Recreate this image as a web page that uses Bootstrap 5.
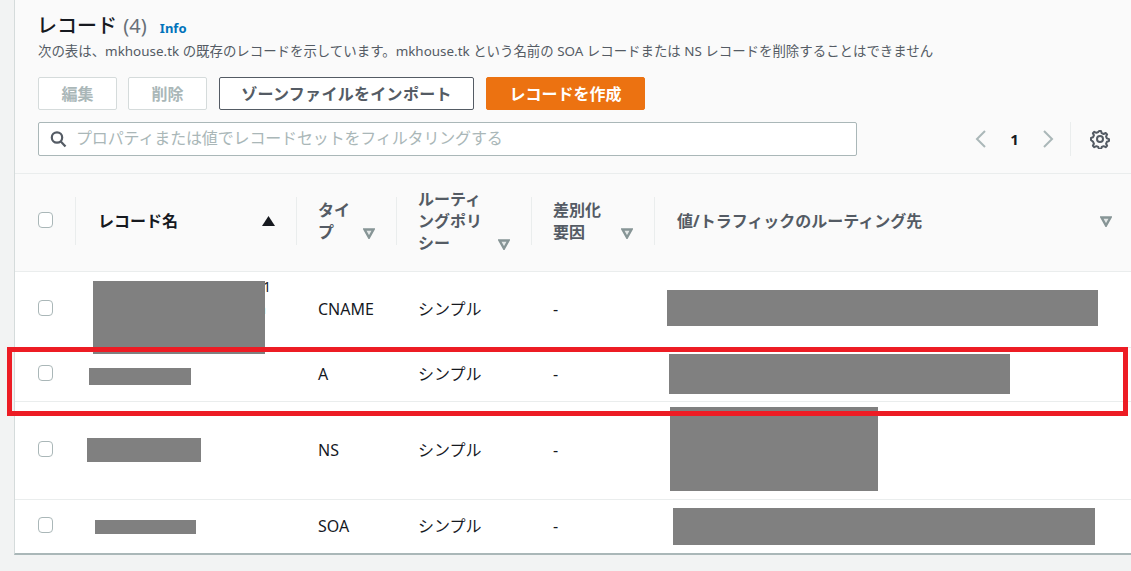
<!DOCTYPE html>
<html lang="ja">
<head>
  <meta charset="UTF-8">
  <title>レコード</title>
  <link href="https://cdn.jsdelivr.net/npm/bootstrap@5.3.0/dist/css/bootstrap.min.css" rel="stylesheet">
  <style>
    html, body { height: 571px; overflow: hidden; }
    body { background: #f2f3f3; color: #16191f; font-family: "Noto Sans", "Noto Sans CJK JP", sans-serif; font-size: 16px; position: relative; }
    .rec-panel { margin-left: 14px; height: 555px; background: #fff; border-left: 1px solid #d5dbdb; border-bottom: 2px solid #aab7b8; }
    .rec-head { background: #fafafa; height: 174px; padding: 13px 0 0 23px; border-bottom: 1px solid #eaeded; }
    .rec-title { font-size: 20px; line-height: 26px; font-weight: 500; margin: 0 0 0 -1px; }
    .rec-count { color: #687078; font-weight: 400; margin-left: 1px; }
    .rec-info { color: #0073bb; font-size: 13px; font-weight: 700; text-decoration: none; margin-left: 8px; }
    .rec-desc { font-size: 13.43px; line-height: 20px; color: #545b64; margin: 0; }
    .rec-tools { margin-top: 16px; gap: 11px; }
    .rec-btn { height: 33px; padding: 0; font-size: 16px; font-weight: 700; line-height: 30px; border-radius: 2px; background: #fff; }
    .rec-btn-off { width: 79px; border: 1px solid #d5dbdb; color: #aab7b8; }
    .rec-btn-off:disabled { border-color: #d5dbdb; color: #aab7b8; background: #fff; opacity: 1; }
    .rec-btn-line { width: 255px; border: 1px solid #545b64; color: #545b64; margin-left: 1px; letter-spacing: .3px; }
    .rec-btn-main { width: 159px; border: 1px solid #ec7211; background: #ec7211; color: #fff; margin-left: 1px; }
    .rec-filter-row { margin-top: 12px; }
    .rec-filter { width: 819px; height: 34px; }
    .rec-filter .form-control { height: 34px; border: 1px solid #aab7b8; border-radius: 2px; padding: 0 8px 2px 37px; font-size: 16px; letter-spacing: -.15px; color: #16191f; }
    .rec-filter .form-control::placeholder { color: #aab7b8; opacity: 1; }
    .rec-search { left: 12px; top: 8px; }
    .rec-pager { margin-left: 117px; height: 34px; }
    .rec-page { width: 55px; text-align: center; font-size: 15px; font-weight: 700; }
    .rec-sep { width: 1px; height: 34px; background: #eaeded; margin-left: 15px; margin-right: 19px; }
    .rec-table { table-layout: fixed; width: 1116px; margin: 0; }
    .rec-table > :not(caption) > * > * { padding: 0; border-bottom: 1px solid #eaeded; box-shadow: none; background: transparent; color: #16191f; vertical-align: middle; }
    .rec-table .rec-h > th { height: 97px; background: #fafafa; font-weight: 700; color: #545b64; line-height: 22px; padding-bottom: 2px; }
    .rec-table .rec-h > th.rec-sorted { color: #16191f; }
    .rec-th { position: relative; min-height: 48px; padding-left: 22px; padding-right: 21px; display: flex; align-items: center; justify-content: space-between; }
    .rec-th::before { content: ""; position: absolute; left: 0; top: 50%; height: 48px; margin-top: -24px; border-left: 1px solid #eaeded; }
    .rec-th svg { flex: none; }
    .rec-th-name { padding-left: 23px; }
    .rec-th-last { padding-left: 23px; padding-right: 19px; }
    .rec-arrow { align-self: flex-end; margin-left: 8px; margin-bottom: 6px; }
    .rec-arrow-low { margin-bottom: 4px; }
    .rec-tick { width: 15px; height: 16px; margin: 0 0 2px 23px; border: 1px solid #aab7b8; border-radius: 3px; display: block; }
    .rec-tick.form-check-input { margin-top: 0; }
    .rec-cell { padding-left: 22px !important; line-height: 22px; }
    .rec-r1 { height: 76px; }
    .rec-r2 { height: 54px; }
    .rec-r3 { height: 98px; }
    .rec-r4 { height: 54px; }
    .rec-table > tbody > tr:last-child > * { border-bottom: 0; }
    .rec-frag { text-align: right; padding-right: 25px; line-height: 22px; height: 22px; font-size: 14px; }
    .rec-frag-link { color: #0073bb; padding-right: 30px; }
    .redact { position: absolute; background: #808080; }
    .rd-n1 { left: 93px; top: 281px; width: 172px; height: 73px; }
    .rd-n2 { left: 89px; top: 368px; width: 102px; height: 17px; }
    .rd-n3 { left: 87px; top: 438px; width: 114px; height: 24px; }
    .rd-n4 { left: 95px; top: 520px; width: 101px; height: 14px; }
    .rd-v1 { left: 667px; top: 290px; width: 431px; height: 36px; }
    .rd-v2 { left: 669px; top: 354px; width: 341px; height: 40px; }
    .rd-v3 { left: 670px; top: 407px; width: 208px; height: 84px; }
    .rd-v4 { left: 673px; top: 508px; width: 422px; height: 37px; }
    .rec-callout { position: absolute; left: 7px; top: 347px; width: 1121px; height: 69px; border: 5px solid #ed1c24; }
  </style>
</head>
<body>
<div class="rec-panel">
  <div class="rec-head">
    <h2 class="rec-title">レコード <span class="rec-count">(4)</span> <a href="#" class="rec-info">Info</a></h2>
    <p class="rec-desc">次の表は、mkhouse.tk の既存のレコードを示しています。mkhouse.tk という名前の SOA レコードまたは NS レコードを削除することはできません</p>
    <div class="d-flex rec-tools">
      <button class="btn rec-btn rec-btn-off" disabled>編集</button>
      <button class="btn rec-btn rec-btn-off" disabled>削除</button>
      <button class="btn rec-btn rec-btn-line">ゾーンファイルをインポート</button>
      <button class="btn rec-btn rec-btn-main">レコードを作成</button>
    </div>
    <div class="d-flex align-items-center rec-filter-row">
      <div class="position-relative rec-filter">
        <svg class="position-absolute rec-search" width="17" height="18" viewBox="0 0 17 18" fill="none" stroke="#545b64" stroke-width="2.2"><circle cx="7" cy="7.500" r="5.200"/><path d="M10.800 11.500 15.500 16.500"/></svg>
        <input type="text" class="form-control" placeholder="プロパティまたは値でレコードセットをフィルタリングする">
      </div>
      <div class="d-flex align-items-center rec-pager">
        <svg width="13" height="20" viewBox="0 0 13 20" fill="none" stroke="#aab7b8" stroke-width="2"><path d="M11 2 3 10l8 8"/></svg>
        <span class="rec-page">1</span>
        <svg width="13" height="20" viewBox="0 0 13 20" fill="none" stroke="#aab7b8" stroke-width="2"><path d="M2 2l8 8-8 8"/></svg>
        <span class="rec-sep"></span>
        <svg width="20" height="20" viewBox="0 0 20 20" fill="none" stroke="#545b64"><circle cx="10" cy="10" r="3" stroke-width="2"/><path stroke-width="2" stroke-linejoin="round" d="M10 2l1 0 .7 2.200 1.900.8 2.100-1 1.400 1.400-1 2.100.8 1.900 2.100.7v2l-2.100.7-.8 1.900 1 2.100-1.400 1.400-2.100-1-1.900.8-.7 2.100H9l-.7-2.100-1.900-.8-2.100 1-1.400-1.400 1-2.100-.8-1.900L1 10.900v-2l2.100-.7.8-1.900-1-2.100 1.400-1.400 2.100 1 1.900-.8L9 2z"/></svg>
      </div>
    </div>
  </div>
  <table class="table rec-table">
    <colgroup>
      <col style="width:60px"><col style="width:221px"><col style="width:100px"><col style="width:135px"><col style="width:123px"><col>
    </colgroup>
    <thead>
      <tr class="rec-h">
        <th><input class="form-check-input rec-tick" type="checkbox"></th>
        <th class="rec-sorted"><div class="rec-th rec-th-name"><span>レコード名</span><svg width="13" height="10" viewBox="0 0 13 10"><path d="M6.500 0 13 10H0z" fill="#16191f"/></svg></div></th>
        <th><div class="rec-th"><span>タイプ</span><svg class="rec-arrow" width="12" height="11" viewBox="0 0 12 11"><path d="M1.500 1.500h9L6 9.500z" fill="#e4e8e8" stroke="#879596" stroke-width="2.400"/></svg></div></th>
        <th><div class="rec-th"><span>ルーティングポリシー</span><svg class="rec-arrow rec-arrow-low" width="12" height="11" viewBox="0 0 12 11"><path d="M1.500 1.500h9L6 9.500z" fill="#e4e8e8" stroke="#879596" stroke-width="2.400"/></svg></div></th>
        <th><div class="rec-th"><span>差別化要因</span><svg class="rec-arrow" width="12" height="11" viewBox="0 0 12 11"><path d="M1.500 1.500h9L6 9.500z" fill="#e4e8e8" stroke="#879596" stroke-width="2.400"/></svg></div></th>
        <th><div class="rec-th rec-th-last"><span>値/トラフィックのルーティング先</span><svg width="12" height="11" viewBox="0 0 12 11"><path d="M1.500 1.500h9L6 9.500z" fill="#e4e8e8" stroke="#879596" stroke-width="2.400"/></svg></div></th>
      </tr>
    </thead>
    <tbody>
      <tr class="rec-r1">
        <td><input class="form-check-input rec-tick" type="checkbox"></td>
        <td><div class="rec-frag">1</div><div class="rec-frag rec-frag-link">n</div><div class="rec-frag"></div></td>
        <td class="rec-cell">CNAME</td><td class="rec-cell">シンプル</td><td class="rec-cell">-</td><td></td>
      </tr>
      <tr class="rec-r2">
        <td><input class="form-check-input rec-tick" type="checkbox"></td>
        <td></td>
        <td class="rec-cell">A</td><td class="rec-cell">シンプル</td><td class="rec-cell">-</td><td></td>
      </tr>
      <tr class="rec-r3">
        <td><input class="form-check-input rec-tick" type="checkbox"></td>
        <td></td>
        <td class="rec-cell">NS</td><td class="rec-cell">シンプル</td><td class="rec-cell">-</td><td></td>
      </tr>
      <tr class="rec-r4">
        <td><input class="form-check-input rec-tick" type="checkbox"></td>
        <td></td>
        <td class="rec-cell">SOA</td><td class="rec-cell">シンプル</td><td class="rec-cell">-</td><td></td>
      </tr>
    </tbody>
  </table>
</div>
<div class="redact rd-n1"></div>
<div class="redact rd-n2"></div>
<div class="redact rd-n3"></div>
<div class="redact rd-n4"></div>
<div class="redact rd-v1"></div>
<div class="redact rd-v2"></div>
<div class="redact rd-v3"></div>
<div class="redact rd-v4"></div>
<div class="rec-callout"></div>
</body>
</html>
